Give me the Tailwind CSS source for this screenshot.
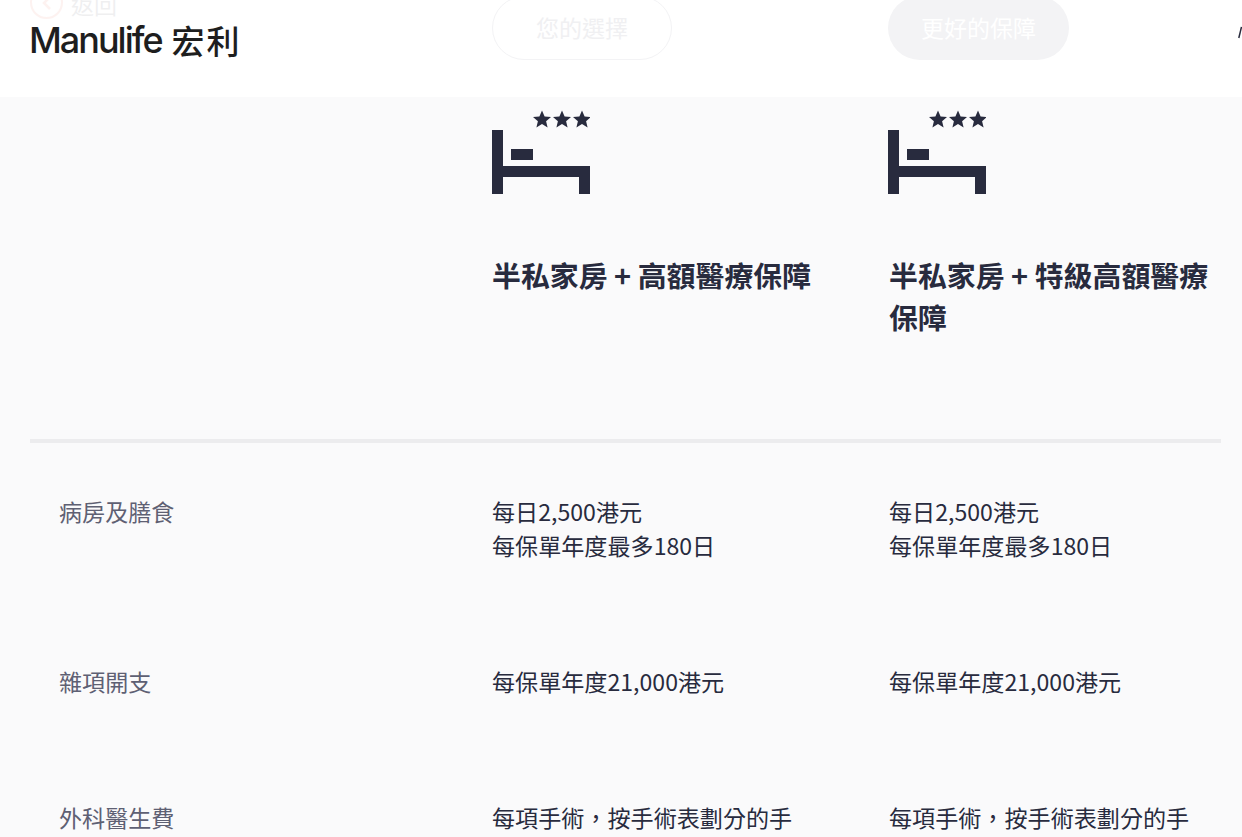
<!DOCTYPE html>
<html lang="zh-Hant">
<head>
  <meta charset="UTF-8">
  <title>Manulife 宏利</title>
  <script src="https://cdn.jsdelivr.net/npm/@tailwindcss/browser@4"></script>
</head>
<body class="bg-[#fafafb] text-[#282b3e] h-[837px] overflow-hidden font-['Noto_Sans_CJK_TC','Noto_Sans',sans-serif]">
  <!-- sticky header, back link and buttons are fading out behind it -->
  <header class="relative h-[97px] bg-white overflow-hidden">
    <div class="grid grid-cols-[492px_396px_1fr] -mt-[4px]">
      <div class="flex items-start gap-[8px] pl-[30px] opacity-[0.07]">
        <span class="flex h-[33px] w-[33px] -mt-[10px] items-center justify-center rounded-full border-2 border-[#e8563f]">
          <svg width="10" height="14" viewBox="0 0 10 14"><path d="M8 1 2 7l6 6" fill="none" stroke="#e8563f" stroke-width="2.500"/></svg>
        </span>
        <span class="text-[23px] leading-[34px] -mt-[9px]">返回</span>
      </div>
      <div>
        <div class="flex h-[64px] w-[180px] items-center justify-center rounded-full border border-[#f3f3f5] pb-[2px] text-[23px] text-[#f0f0f2]">您的選擇</div>
      </div>
      <div class="flex justify-between">
        <div class="flex h-[64px] w-[181px] items-center justify-center rounded-full bg-[#f3f3f5] pb-[2px] text-[23px] text-white">更好的保障</div>
        <svg width="4" height="14" viewBox="0 0 4 14" class="mt-[30px]"><path d="M3.500 1 .8 12" fill="none" stroke="#282b3e" stroke-width="1.500"/></svg>
      </div>
    </div>
    <div class="absolute left-[29px] top-[17px] flex items-center gap-[10px] text-[#1e1e1e]">
      <span class="font-['Inter'] font-medium text-[36px] leading-[46px] tracking-[-2px]">Manulife</span>
      <span class="font-medium text-[33px] leading-[46px] tracking-[2px]">宏利</span>
    </div>
  </header>

  <main class="pl-[30px] pr-[21px]">
    <div class="grid grid-cols-[462px_396px_1fr] h-[346px] border-b-[4px] border-[#ececee]">
      <div></div>
      <div class="pt-[13px]">
        <svg width="98" height="85" viewBox="0 0 98 85" fill="#282b3e" class="block">
          <path d="M0 20h11v64H0zM19 39h22v11H19zM11 56h87v28H87V67H11z"/>
          <path d="M50 .5l2.600 6 6.400.5-4.900 4.200 1.500 6.300-5.600-3.400-5.600 3.400 1.500-6.300L41 7l6.400-.5z"/>
          <path d="M70 .5l2.600 6 6.400.5-4.900 4.200 1.500 6.300-5.600-3.400-5.600 3.400 1.500-6.300L61 7l6.400-.5z"/>
          <path d="M90 .5l2.600 6 6.400.5-4.900 4.200 1.500 6.300-5.600-3.400-5.600 3.400 1.500-6.300L81 7l6.400-.5z"/>
        </svg>
        <h2 class="mt-[58px] text-[28.900px] leading-[42px] font-bold">半私家房 + 高額醫療保障</h2>
      </div>
      <div class="pt-[13px]">
        <svg width="98" height="85" viewBox="0 0 98 85" fill="#282b3e" class="block">
          <path d="M0 20h11v64H0zM19 39h22v11H19zM11 56h87v28H87V67H11z"/>
          <path d="M50 .5l2.600 6 6.400.5-4.900 4.200 1.500 6.300-5.600-3.400-5.600 3.400 1.500-6.300L41 7l6.400-.5z"/>
          <path d="M70 .5l2.600 6 6.400.5-4.900 4.200 1.500 6.300-5.600-3.400-5.600 3.400 1.500-6.300L61 7l6.400-.5z"/>
          <path d="M90 .5l2.600 6 6.400.5-4.900 4.200 1.500 6.300-5.600-3.400-5.600 3.400 1.500-6.300L81 7l6.400-.5z"/>
        </svg>
        <h2 class="mt-[58px] pl-[1px] text-[28.900px] leading-[42px] font-bold">半私家房 + 特級高額醫療保障</h2>
      </div>
    </div>

    <div class="grid grid-cols-[462px_397px_1fr] gap-y-[102px] pt-[51px] text-[23.100px] leading-[34px]">
      <div class="pl-[29px] text-[#5e6073]">病房及膳食</div>
      <div>每日2,500港元<br>每保單年度最多180日</div>
      <div>每日2,500港元<br>每保單年度最多180日</div>

      <div class="pl-[29px] text-[#5e6073]">雜項開支</div>
      <div>每保單年度21,000港元</div>
      <div>每保單年度21,000港元</div>

      <div class="pl-[29px] text-[#5e6073]">外科醫生費</div>
      <div class="whitespace-nowrap">每項手術&#65292;按手術表劃分的手</div>
      <div class="whitespace-nowrap">每項手術&#65292;按手術表劃分的手</div>
    </div>
  </main>
</body>
</html>
